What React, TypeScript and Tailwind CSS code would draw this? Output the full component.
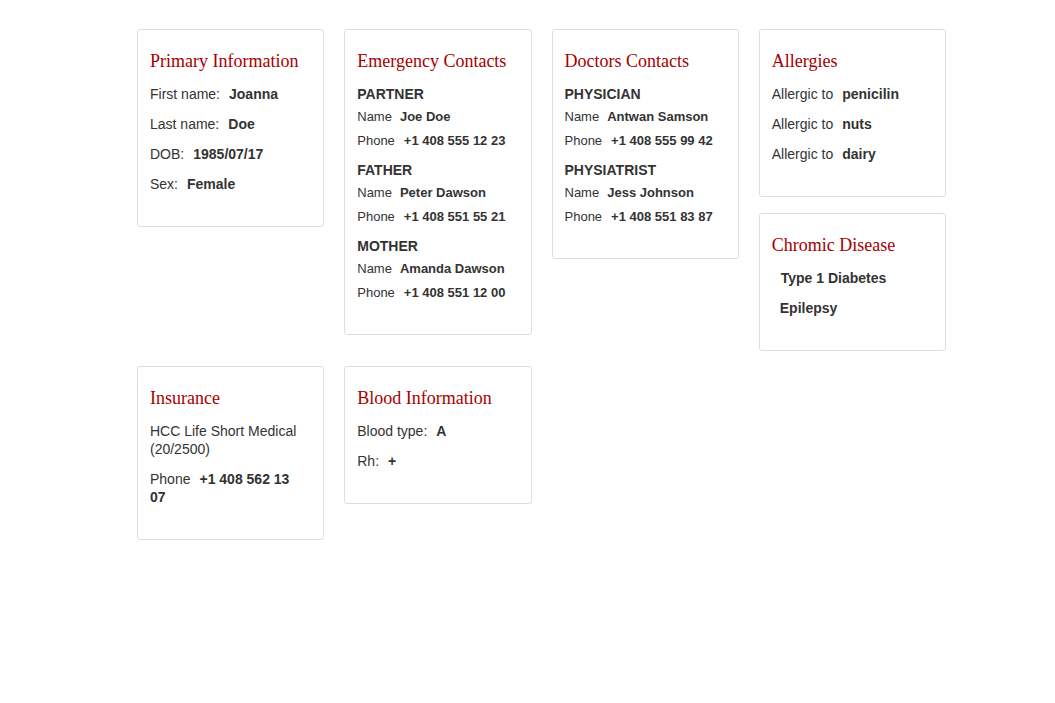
import type { ReactNode } from 'react'

const sans = { fontFamily: '"Liberation Sans", Arial, sans-serif' }

function Card({ title, children }: { title: string; children: ReactNode }) {
  return (
    <div className="border border-[#dedede] rounded-[3px] bg-white pl-[12px] pr-[16px] pt-[20px] pb-[21px]">
      <h2 className="font-['Liberation_Serif',serif] text-[18px] leading-[22px] text-[#a50000] mb-[13px]">
        {title}
      </h2>
      {children}
    </div>
  )
}

function Field({ label, value }: { label: string; value: string }) {
  return (
    <p className="text-[14px] leading-[18px] mb-[12px] text-[#333]">
      <span>{label}</span>
      <b className="ml-[9px] font-bold">{value}</b>
    </p>
  )
}

interface Contact {
  role: string
  name: string
  phone: string
}

function ContactGroup({ c }: { c: Contact }) {
  return (
    <div className="mb-[8px] text-[#333]">
      <div className="text-[14px] leading-[18px] font-bold mb-[2px]">{c.role}</div>
      <div className="text-[13px] leading-[24px]">
        Name<b className="ml-[8px] font-bold">{c.name}</b>
      </div>
      <div className="text-[13px] leading-[24px]">
        Phone<b className="ml-[9px] font-bold">{c.phone}</b>
      </div>
    </div>
  )
}

const emergency: Contact[] = [
  { role: 'PARTNER', name: 'Joe Doe', phone: '+1 408 555 12 23' },
  { role: 'FATHER', name: 'Peter Dawson', phone: '+1 408 551 55 21' },
  { role: 'MOTHER', name: 'Amanda Dawson', phone: '+1 408 551 12 00' },
]

const doctors: Contact[] = [
  { role: 'PHYSICIAN', name: 'Antwan Samson', phone: '+1 408 555 99 42' },
  { role: 'PHYSIATRIST', name: 'Jess Johnson', phone: '+1 408 551 83 87' },
]

export default function App() {
  return (
    <div className="min-h-screen bg-white" style={sans}>
      <div className="ml-[137px] pt-[29px] w-[809px] grid grid-cols-4 gap-x-5 gap-y-[15px] items-start">
        <Card title="Primary Information">
          <Field label="First name:" value="Joanna" />
          <Field label="Last name:" value="Doe" />
          <Field label="DOB:" value="1985/07/17" />
          <Field label="Sex:" value="Female" />
        </Card>

        <Card title="Emergency Contacts">
          {emergency.map((c) => (
            <ContactGroup key={c.role} c={c} />
          ))}
        </Card>

        <Card title="Doctors Contacts">
          {doctors.map((c) => (
            <ContactGroup key={c.role} c={c} />
          ))}
        </Card>

        <div className="flex flex-col gap-4">
          <Card title="Allergies">
            <Field label="Allergic to" value="penicilin" />
            <Field label="Allergic to" value="nuts" />
            <Field label="Allergic to" value="dairy" />
          </Card>
          <Card title="Chromic Disease">
            <p className="text-[14px] leading-[18px] mb-[12px] pl-[9px] font-bold text-[#333]">Type 1 Diabetes</p>
            <p className="text-[14px] leading-[18px] mb-[12px] pl-[8px] font-bold text-[#333]">Epilepsy</p>
          </Card>
        </div>

        <Card title="Insurance">
          <p className="text-[14px] leading-[18px] mb-[12px] text-[#333]">HCC Life Short Medical (20/2500)</p>
          <Field label="Phone" value="+1 408 562 13 07" />
        </Card>

        <Card title="Blood Information">
          <Field label="Blood type:" value="A" />
          <Field label="Rh:" value="+" />
        </Card>
      </div>
    </div>
  )
}
